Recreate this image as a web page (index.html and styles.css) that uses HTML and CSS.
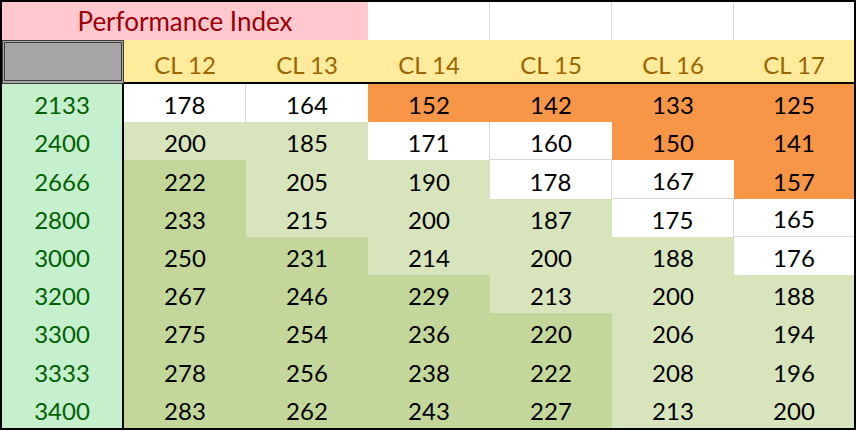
FILE: index.html
```html
<!DOCTYPE html>
<html>
<head>
<meta charset="utf-8">
<link rel="stylesheet" href="styles.css">
</head>
<body>
<div class="sheet">
  <div class="c title">Performance Index</div>
  <div class="c blank gr"></div>
  <div class="c blank gr"></div>
  <div class="c blank gr"></div>
  <div class="c blank"></div>

  <div class="c corner"></div>
  <div class="c hd">CL 12</div>
  <div class="c hd">CL 13</div>
  <div class="c hd">CL 14</div>
  <div class="c hd">CL 15</div>
  <div class="c hd">CL 16</div>
  <div class="c hd">CL 17</div>

  <div class="c rh">2133</div>
  <div class="c w gr">178</div><div class="c w">164</div><div class="c o">152</div><div class="c o">142</div><div class="c o">133</div><div class="c o">125</div>

  <div class="c rh">2400</div>
  <div class="c l">200</div><div class="c l">185</div><div class="c w gr">171</div><div class="c w gb">160</div><div class="c o">150</div><div class="c o">141</div>

  <div class="c rh">2666</div>
  <div class="c d">222</div><div class="c l">205</div><div class="c l">190</div><div class="c w gr">178</div><div class="c w gb">167</div><div class="c o">157</div>

  <div class="c rh">2800</div>
  <div class="c d">233</div><div class="c l">215</div><div class="c l">200</div><div class="c l">187</div><div class="c w gr">175</div><div class="c w gb">165</div>

  <div class="c rh">3000</div>
  <div class="c d">250</div><div class="c d">231</div><div class="c l">214</div><div class="c l">200</div><div class="c l">188</div><div class="c w">176</div>

  <div class="c rh">3200</div>
  <div class="c d">267</div><div class="c d">246</div><div class="c d">229</div><div class="c l">213</div><div class="c l">200</div><div class="c l">188</div>

  <div class="c rh">3300</div>
  <div class="c d">275</div><div class="c d">254</div><div class="c d">236</div><div class="c d">220</div><div class="c l">206</div><div class="c l">194</div>

  <div class="c rh">3333</div>
  <div class="c d">278</div><div class="c d">256</div><div class="c d">238</div><div class="c d">222</div><div class="c l">208</div><div class="c l">196</div>

  <div class="c rh">3400</div>
  <div class="c d">283</div><div class="c d">262</div><div class="c d">243</div><div class="c d">227</div><div class="c l">213</div><div class="c l">200</div>
</div>
</body>
</html>
```

FILE: styles.css
```css
* { box-sizing: border-box; }
html, body { margin: 0; padding: 0; background: #fff; }
.sheet {
  width: 856px;
  height: 430px;
  border: 2px solid #000;
  display: grid;
  grid-template-columns: 122px repeat(5, 122px) 120px;
  grid-template-rows: 38px 44px repeat(9, 1fr);
  font-family: Lato, "Open Sans", sans-serif;
  font-size: 24px;
  color: #000;
}
.c {
  display: flex;
  align-items: center;
  justify-content: center;
  padding-top: 3px;
  white-space: nowrap;
}
.title {
  grid-column: 1 / 4;
  background: #FFC7CE;
  color: #9C0006;
  font-size: 26px;
  padding-top: 0;
}
.blank { background: #fff; }
.gr { border-right: 1px solid #d9d9d9; }
.gb { border-bottom: 1px solid #d9d9d9; }
.corner {
  background: #A5A5A5;
  border: 3px double #3F3F3F;
  border-bottom-width: 4px;
}
.hd {
  background: #FFEB9C;
  color: #9C6500;
  border-bottom: 2px solid #000;
  padding-top: 6px;
}
.rh {
  background: #C6EFCE;
  color: #006100;
  border-right: 2px solid #000;
}
.w { background: #fff; }
.o { background: #F79646; }
.l { background: #D8E4BC; }
.d { background: #C4D79B; }
```
